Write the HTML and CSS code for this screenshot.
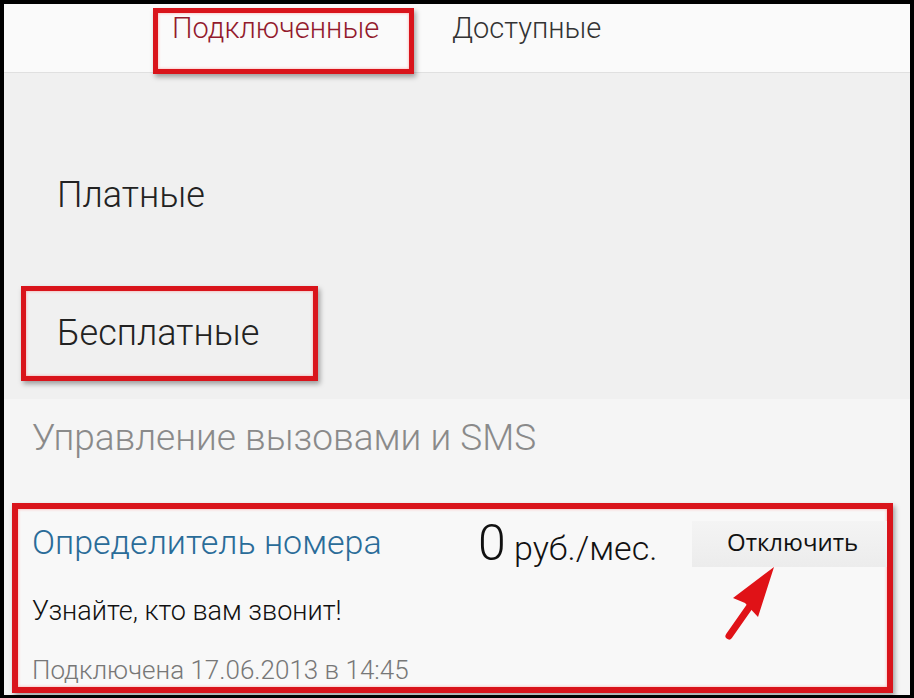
FILE: index.html
```html
<!DOCTYPE html>
<html lang="ru">
<head>
  <meta charset="UTF-8">
  <meta name="viewport" content="width=device-width, initial-scale=1.0">
  <title>Услуги</title>
  <link rel="stylesheet" href="styles.css">
</head>
<body>
  <div class="page">
    <div class="tabs">
      <div class="mark tab-mark">
        <span class="tab active">Подключенные</span>
      </div>
      <span class="tab">Доступные</span>
    </div>

    <div class="groups">
      <div class="group">Платные</div>
      <div class="mark group-mark">
        <div class="group">Бесплатные</div>
      </div>
    </div>

    <div class="section">
      <h2 class="section-title">Управление вызовами и SMS</h2>

      <div class="mark card">
        <div class="card-top">
          <a class="service-name">Определитель номера</a>
          <div class="price"><span class="price-num">0</span> руб./мес.</div>
          <button class="off-btn">Отключить</button>
        </div>
        <p class="service-desc">Узнайте, кто вам звонит!</p>
        <p class="service-date">Подключена 17.06.2013 в 14:45</p>

        <svg class="arrow" width="60" height="75" viewBox="0 0 60 75">
          <path d="M6 69 L27 39" stroke="#e01217" stroke-width="7" stroke-linecap="round" fill="none"/>
          <path d="M51 0 L10 31 L22 36 L35 50 Z" fill="#e01217"/>
        </svg>
      </div>
    </div>
  </div>
</body>
</html>
```

FILE: styles.css
```css
* {
  margin: 0;
  padding: 0;
  box-sizing: border-box;
}

body {
  background: #000;
  padding: 4px 4px 3px 4px;
  height: 698px;
  overflow: hidden;
  font-family: Roboto, "Liberation Sans", sans-serif;
}

.page {
  background: #f4f4f4;
  height: 691px;
  overflow: hidden;
}

/* red annotation frames */
.mark {
  border: 5px solid #d9141b;
  box-shadow: 2px 3px 5px rgba(0, 0, 0, 0.35), inset 0 0 3px rgba(255, 80, 80, 0.5);
}

.tabs {
  display: flex;
  align-items: flex-start;
  height: 69px;
  background: #fafafa;
  border-bottom: 1px solid #e0e0e0;
  padding-left: 149px;
}

.tab-mark {
  width: 261px;
  height: 66px;
  margin-top: 4px;
  padding: 0 0 0 14px;
}

.tab {
  font-size: 29px;
  font-weight: 300;
  color: #333;
  line-height: 30px;
}

.tab.active {
  color: #931a2d;
}

.tabs > .tab {
  margin: 9px 0 0 38px;
}

.groups {
  background: #f0f0f0;
  padding: 102px 0 18px 17px;
}

.group {
  font-size: 36px;
  font-weight: 300;
  color: #222;
  line-height: 40px;
  padding-left: 36px;
}

.group-mark {
  width: 297px;
  height: 95px;
  margin-top: 71px;
  padding-top: 22px;
}

.group-mark .group {
  padding-left: 31px;
}

.section {
  background: #f5f5f5;
  padding: 18px 17px 0 8px;
}

.section-title {
  font-size: 37px;
  font-weight: 300;
  color: #8a8a8a;
  line-height: 42px;
  padding-left: 20px;
  margin-bottom: 44px;
}

.card {
  position: relative;
  border-width: 6px;
  height: 190px;
  padding: 12px 0 0 14px;
  background: #f8f8f8;
}

.card-top {
  display: flex;
  align-items: center;
  height: 46px;
}

.service-name {
  font-size: 34px;
  font-weight: 300;
  color: #2a6c98;
  width: 446px;
  line-height: 40px;
  margin-bottom: 4px;
}

.price {
  font-size: 34px;
  font-weight: 300;
  color: #111;
  width: 214px;
  line-height: 46px;
}

.price-num {
  font-size: 50px;
  line-height: 1;
}

.off-btn {
  font-family: "Open Sans", "Liberation Sans", sans-serif;
  font-size: 24px;
  color: #111;
  border: none;
  background: linear-gradient(#f4f4f4, #ececec);
  width: 195px;
  height: 46px;
  padding: 0 0 6px 35px;
  text-align: left;
}

.service-desc {
  font-size: 27px;
  font-weight: 300;
  color: #111;
  line-height: 28px;
  margin-top: 30px;
}

.service-date {
  font-size: 26px;
  font-weight: 300;
  color: #777;
  line-height: 28px;
  margin-top: 31px;
}

.arrow {
  position: absolute;
  left: 705px;
  top: 58px;
}
```
